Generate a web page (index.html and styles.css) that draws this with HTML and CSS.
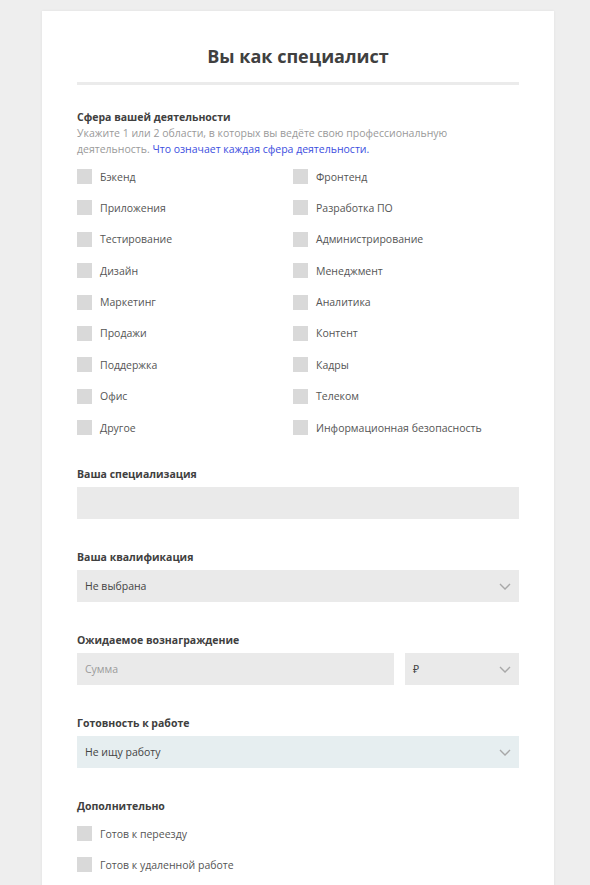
FILE: index.html
```html
<!DOCTYPE html>
<html lang="ru">
<head>
<meta charset="utf-8">
<link rel="stylesheet" href="styles.css">
</head>
<body>
<div class="card">
  <h1 class="title">Вы как специалист</h1>
  <div class="divider"></div>

  <div class="section first">
    <div class="label">Сфера вашей деятельности</div>
    <div class="hint">Укажите 1 или 2 области, в которых вы ведёте свою профессиональную деятельность. <a href="#">Что означает каждая сфера деятельности.</a></div>
    <div class="checks">
      <label class="check"><span class="box"></span>Бэкенд</label>
      <label class="check"><span class="box"></span>Фронтенд</label>
      <label class="check"><span class="box"></span>Приложения</label>
      <label class="check"><span class="box"></span>Разработка ПО</label>
      <label class="check"><span class="box"></span>Тестирование</label>
      <label class="check"><span class="box"></span>Администрирование</label>
      <label class="check"><span class="box"></span>Дизайн</label>
      <label class="check"><span class="box"></span>Менеджмент</label>
      <label class="check"><span class="box"></span>Маркетинг</label>
      <label class="check"><span class="box"></span>Аналитика</label>
      <label class="check"><span class="box"></span>Продажи</label>
      <label class="check"><span class="box"></span>Контент</label>
      <label class="check"><span class="box"></span>Поддержка</label>
      <label class="check"><span class="box"></span>Кадры</label>
      <label class="check"><span class="box"></span>Офис</label>
      <label class="check"><span class="box"></span>Телеком</label>
      <label class="check"><span class="box"></span>Другое</label>
      <label class="check"><span class="box"></span>Информационная безопасность</label>
    </div>
  </div>

  <div class="section spec">
    <div class="label">Ваша специализация</div>
    <div class="field"></div>
  </div>

  <div class="section">
    <div class="label">Ваша квалификация</div>
    <div class="field select"><span>Не выбрана</span>
      <svg class="chev" width="12" height="7" viewBox="0 0 12 7"><path d="M1 1l5 5 5-5" fill="none" stroke="#a8a8a8" stroke-width="1.4"/></svg>
    </div>
  </div>

  <div class="section">
    <div class="label">Ожидаемое вознаграждение</div>
    <div class="row">
      <div class="field amount"><span class="ph">Сумма</span></div>
      <div class="field select currency"><span>₽</span>
        <svg class="chev" width="12" height="7" viewBox="0 0 12 7"><path d="M1 1l5 5 5-5" fill="none" stroke="#a8a8a8" stroke-width="1.4"/></svg>
      </div>
    </div>
  </div>

  <div class="section">
    <div class="label">Готовность к работе</div>
    <div class="field select blue"><span>Не ищу работу</span>
      <svg class="chev" width="12" height="7" viewBox="0 0 12 7"><path d="M1 1l5 5 5-5" fill="none" stroke="#a8a8a8" stroke-width="1.4"/></svg>
    </div>
  </div>

  <div class="section">
    <div class="label">Дополнительно</div>
    <div class="extra">
      <label class="check"><span class="box"></span>Готов к переезду</label>
      <label class="check"><span class="box"></span>Готов к удаленной работе</label>
    </div>
  </div>
</div>
</body>
</html>
```

FILE: styles.css
```css
html, body {
  margin: 0;
  padding: 0;
  background: #eeeeee;
  height: 885px;
  overflow: hidden;
}
body {
  font-family: "Open Sans", "Noto Sans", sans-serif;
  color: #444;
  padding: 11px 0 0 42px;
  box-sizing: border-box;
}
.card {
  width: 512px;
  background: #fff;
  box-sizing: border-box;
  padding: 30px 35px 40px;
  box-shadow: 0 0 3px rgba(0,0,0,0.06);
  min-height: 900px;
}
.title {
  margin: 0;
  text-align: center;
  font-size: 18px;
  font-weight: 700;
  line-height: 30px;
  color: #404040;
}
.divider {
  height: 3px;
  background: #ebebeb;
  margin-top: 11px;
}
.section {
  margin-top: 30px;
}
.section.first {
  margin-top: 24px;
}
.section.spec {
  margin-top: 31px;
}
.label {
  font-size: 10.5px;
  font-weight: 700;
  line-height: 16px;
  color: #404040;
  margin-bottom: 5px;
}
.section.first .label {
  margin-bottom: 0;
}
.hint {
  font-size: 10.5px;
  line-height: 16px;
  color: #9a9a9a;
  padding-right: 20px;
}
.hint a {
  color: #3c4ee0;
  text-decoration: none;
}
.checks {
  margin-top: 12px;
  display: grid;
  grid-template-columns: 216px 1fr;
  row-gap: 16.4px;
}
.check {
  display: flex;
  align-items: center;
  height: 15px;
  font-size: 10.5px;
  color: #555;
}
.box {
  width: 15px;
  height: 15px;
  background: #d9d9d9;
  margin-right: 8px;
  flex: none;
}
.field {
  height: 32px;
  background: #eaeaea;
  display: flex;
  align-items: center;
  padding: 0 8px;
  box-sizing: border-box;
  font-size: 10.5px;
  color: #444;
}
.select {
  justify-content: space-between;
}
.row {
  display: flex;
  gap: 11px;
}
.amount {
  flex: 1;
}
.ph {
  color: #9a9a9a;
}
.currency {
  width: 114px;
  flex: none;
}
.blue {
  background: #e6eef0;
}
.extra {
  display: flex;
  flex-direction: column;
  gap: 16px;
  margin-top: 12px;
}
```
